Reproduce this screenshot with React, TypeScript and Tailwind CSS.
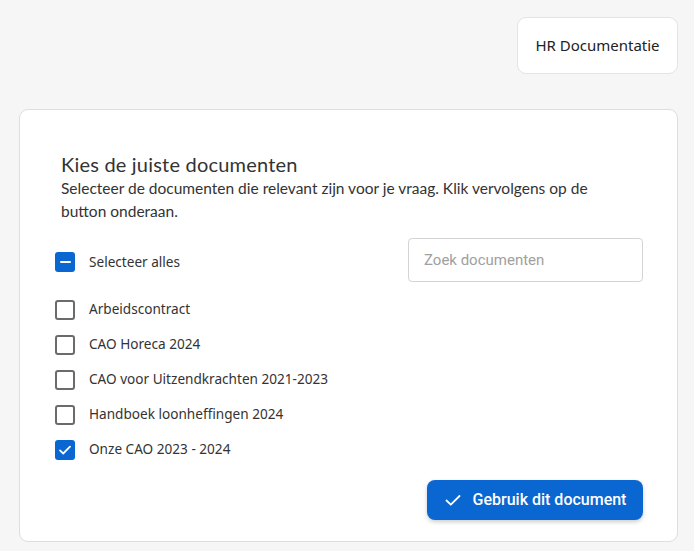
import { useState } from "react";

const docs = [
  "Arbeidscontract",
  "CAO Horeca 2024",
  "CAO voor Uitzendkrachten 2021-2023",
  "Handboek loonheffingen 2024",
  "Onze CAO 2023 - 2024",
];

function Box({ state }: { state: "off" | "on" | "some" }) {
  if (state === "off") {
    return <span className="w-5 h-5 shrink-0 rounded-[3px] border-2 border-[#6b6b6b] bg-white" />;
  }
  return (
    <span className="w-5 h-5 shrink-0 rounded-[3px] bg-[#0a66d0] flex items-center justify-center">
      {state === "on" ? (
        <svg width="14" height="14" viewBox="0 0 14 14" fill="none">
          <path d="M2 7.4l3.2 3.1L12 3.6" stroke="white" strokeWidth="1.8" strokeLinecap="round" strokeLinejoin="round" />
        </svg>
      ) : (
        <span className="w-[11px] h-[2px] bg-white rounded" />
      )}
    </span>
  );
}

export default function App() {
  const [checked] = useState([false, false, false, false, true]);

  return (
    <div className="min-h-screen bg-[#f6f6f6] pt-[17px] px-[16px] pb-2 font-['Noto_Sans',sans-serif]">
      {/* top chip */}
      <div className="flex justify-end">
        <div className="w-[161px] h-[57px] bg-white border border-[#e4e4e4] rounded-[9px] flex items-center justify-center text-[15px] text-[#222]">
          HR Documentatie
        </div>
      </div>

      {/* main card */}
      <div className="mt-[35px] ml-[3px] bg-white border border-[#dedede] rounded-[9px] pt-[41px] pb-[21px] pl-[35px] pr-[34px]">
        <div className="pl-[6px] text-[#333]">
          <h2 className="text-[20px] leading-[26px] font-['Lato',sans-serif] tracking-[0.2px]">Kies de juiste documenten</h2>
          <p className="text-[15.5px] leading-[23px] font-['Lato',sans-serif] max-w-[575px]">
            Selecteer de documenten die relevant zijn voor je vraag. Klik vervolgens op de button onderaan.
          </p>
        </div>

        <div className="mt-[15px] flex items-start justify-between">
          <div className="flex flex-col">
            <label className="flex items-center gap-[14px] h-[44px] pt-[4px]">
              <Box state="some" />
              <span className="text-[13.6px] text-[#333]">Selecteer alles</span>
            </label>
            <div className="mt-[10px] flex flex-col">
              {docs.map((d, i) => (
                <label key={d} className="flex items-center gap-[14px] h-[35px]">
                  <Box state={checked[i] ? "on" : "off"} />
                  <span className="text-[13.6px] text-[#333]">{d}</span>
                </label>
              ))}
            </div>
          </div>
          <input
            placeholder="Zoek documenten"
            className="w-[235px] h-[44px] border border-[#d4d4d4] rounded-[4px] px-[15px] text-[15px] font-['Roboto',sans-serif] placeholder:text-[#a0a0a0] outline-none"
          />
        </div>

        <div className="mt-[13px] flex justify-end">
          <button className="h-[40px] w-[216px] rounded-[8px] bg-[#0a66d0] text-white flex items-center justify-center gap-[11px] font-['Roboto',sans-serif] font-medium text-[16px] shadow-[0_2px_4px_rgba(0,0,0,0.2)]">
            <svg width="18" height="18" viewBox="0 0 18 18" fill="none">
              <path d="M2.5 9.5l4.3 4.2L15.5 5" stroke="white" strokeWidth="1.8" strokeLinecap="round" strokeLinejoin="round" />
            </svg>
            Gebruik dit document
          </button>
        </div>
      </div>
    </div>
  );
}
